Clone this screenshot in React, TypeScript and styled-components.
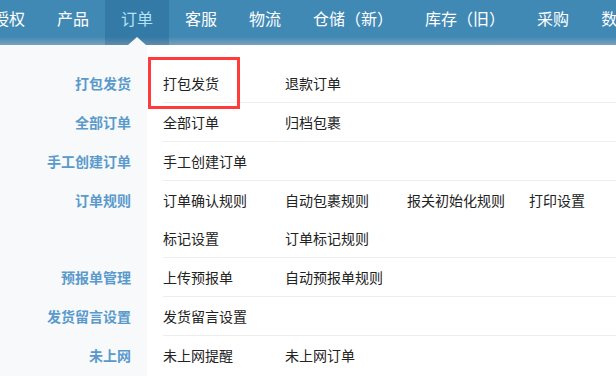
import React from "react";
import styled, { createGlobalStyle } from "styled-components";

const GlobalStyle = createGlobalStyle`
  html, body {
    margin: 0;
    padding: 0;
    overflow: hidden;
    background: #ffffff;
  }
  body {
    font-family: "Noto Sans CJK SC", "Noto Sans", sans-serif;
  }
`;

const Page = styled.div`
  width: 820px;
  min-height: 100vh;
`;

const NavBar = styled.nav`
  display: flex;
  height: 45px;
  margin-left: -23px;
  background: linear-gradient(to bottom, #4189b5 0, #4189b5 37px, #7aa1bb 45px);
`;

const NavItem = styled.div<{ $active?: boolean }>`
  position: relative;
  height: 45px;
  padding: 0 16px;
  line-height: 36px;
  font-size: 16px;
  white-space: nowrap;
  color: ${(p) => (p.$active ? "#b4e2f7" : "#ffffff")};
  background: ${(p) => (p.$active ? "rgba(10, 70, 120, 0.22)" : "transparent")};

  &::after {
    content: "";
    display: ${(p) => (p.$active ? "block" : "none")};
    position: absolute;
    left: 50%;
    bottom: 0;
    transform: translateX(-50%);
    border-left: 9px solid transparent;
    border-right: 9px solid transparent;
    border-bottom: 8px solid #f7f9fb;
  }
`;

const Menu = styled.div`
  padding-top: 19px;
  min-height: calc(100vh - 45px);
  background: linear-gradient(to right, #f7f9fb 0, #f7f9fb 147px, #ffffff 147px);
`;

const Row = styled.div`
  display: grid;
  grid-template-columns: 147px 560px;
`;

const Label = styled.div`
  padding-right: 16px;
  text-align: right;
  line-height: 38px;
  font-size: 14px;
  font-weight: 700;
  color: #5a9acb;
`;

const Links = styled.div<{ $last?: boolean }>`
  margin-left: 16px;
  display: flex;
  flex-wrap: wrap;
  border-bottom: ${(p) => (p.$last ? "none" : "1px solid #eeeeee")};
`;

const LinkItem = styled.a<{ $highlight?: boolean }>`
  position: relative;
  width: 122px;
  line-height: 38px;
  font-size: 14px;
  color: #222222;
  text-decoration: none;
  white-space: nowrap;

  &::after {
    content: "";
    display: ${(p) => (p.$highlight ? "block" : "none")};
    position: absolute;
    left: -15px;
    top: -7px;
    width: 86px;
    height: 46px;
    border: 3px solid #ff3b3b;
  }
`;

const navItems = ["授权", "产品", "订单", "客服", "物流", "仓储（新）", "库存（旧）", "采购", "数据"];

const rows: { label: string; links: string[] }[] = [
  { label: "打包发货", links: ["打包发货", "退款订单"] },
  { label: "全部订单", links: ["全部订单", "归档包裹"] },
  { label: "手工创建订单", links: ["手工创建订单"] },
  {
    label: "订单规则",
    links: ["订单确认规则", "自动包裹规则", "报关初始化规则", "打印设置", "标记设置", "订单标记规则"],
  },
  { label: "预报单管理", links: ["上传预报单", "自动预报单规则"] },
  { label: "发货留言设置", links: ["发货留言设置"] },
  { label: "未上网", links: ["未上网提醒", "未上网订单"] },
];

export default function App() {
  return (
    <Page>
      <GlobalStyle />
      <NavBar>
        {navItems.map((item) => (
          <NavItem key={item} $active={item === "订单"}>
            {item}
          </NavItem>
        ))}
      </NavBar>
      <Menu>
        {rows.map((row, ri) => (
          <Row key={row.label}>
            <Label>{row.label}</Label>
            <Links $last={ri === rows.length - 1}>
              {row.links.map((link, li) => (
                <LinkItem key={link} href="#" $highlight={ri === 0 && li === 0}>
                  {link}
                </LinkItem>
              ))}
            </Links>
          </Row>
        ))}
      </Menu>
    </Page>
  );
}
